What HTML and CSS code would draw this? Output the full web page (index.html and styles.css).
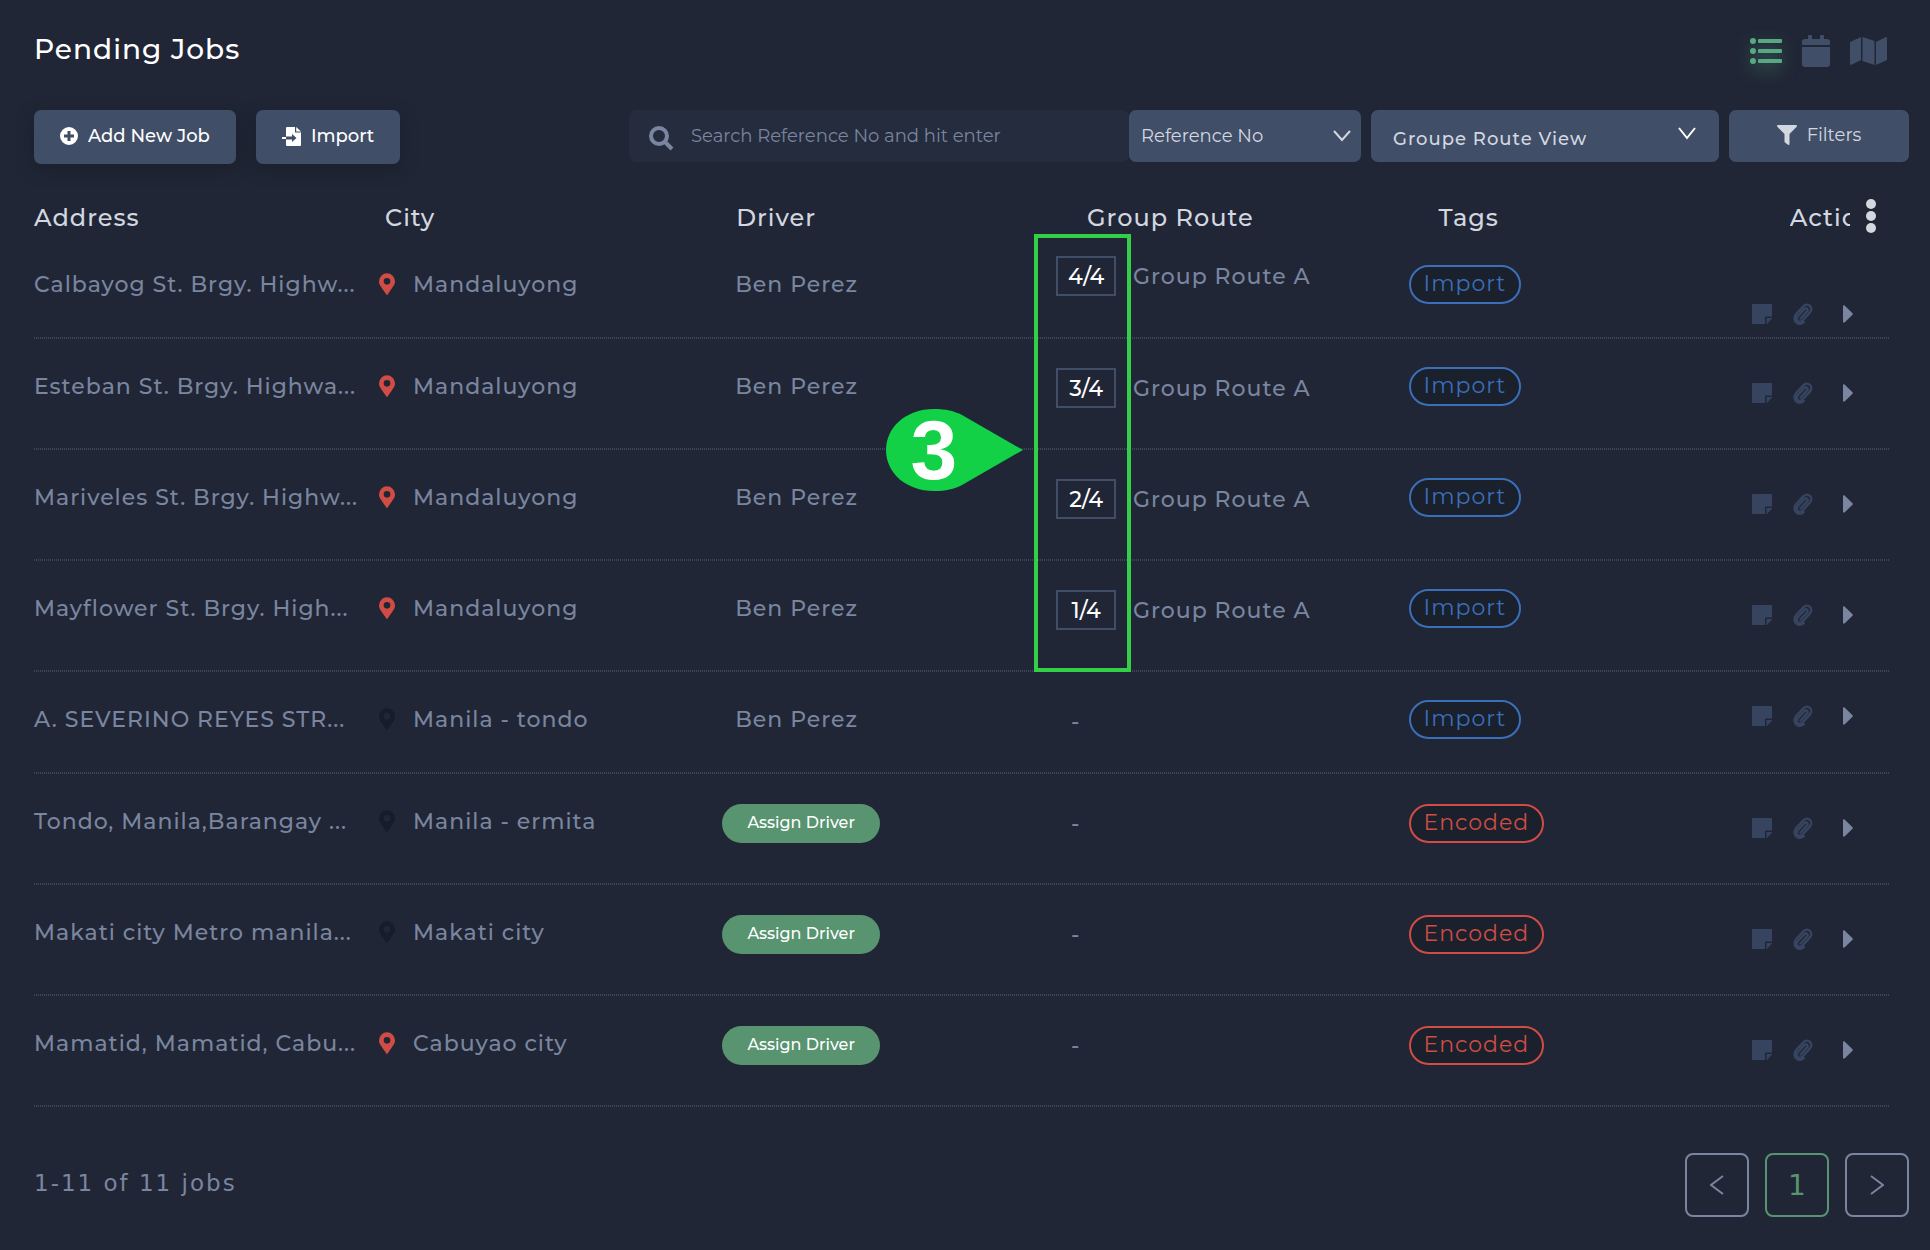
FILE: index.html
```html
<!DOCTYPE html>
<html lang="en">
<head>
<meta charset="utf-8">
<meta name="viewport" content="width=device-width, initial-scale=1">
<title>Pending Jobs</title>
<link rel="stylesheet" href="styles.css">
</head>
<body>
<svg class="sprite" aria-hidden="true">
  <symbol id="pin" viewBox="0 0 384 512"><path d="M172 502C27 291 0 270 0 192a192 192 0 0 1 384 0c0 78-27 99-172 310a24 24 0 0 1-40 0zM192 272a80 80 0 1 0 0-160 80 80 0 0 0 0 160z"/></symbol>
  <symbol id="note" viewBox="0 0 20 20"><path d="M1 0h18a1 1 0 0 1 1 1v11.500h-6a1 1 0 0 0-1 1V20H1a1 1 0 0 1-1-1V1a1 1 0 0 1 1-1z"/><path d="M14.500 14H20v.5L15 20h-.5z"/></symbol>
  <symbol id="clip" viewBox="0 0 20 22"><path d="M7.500 15.500 14 8.500c1.800-2-.8-4.300-2.600-2.400L4.800 13c-3.200 3.600 1 8 4.600 4.600l7.400-8c4.300-4.800-1.800-10.800-6.500-6.200L3.400 10.800C-1.800 17 5 24 10.800 19" fill="none" stroke="currentColor" stroke-width="2.400" stroke-linecap="round"/></symbol>
  <symbol id="caret" viewBox="0 0 10 18"><path d="M0 1.500C0 .2 1 0 1.800.8L9.500 8.200a1.200 1.200 0 0 1 0 1.600l-7.700 7.400C1 18 0 17.800 0 16.500z"/></symbol>
</svg>

<main class="page">
  <header class="top">
    <h1 class="title">Pending Jobs</h1>
    <nav class="views" aria-label="View">
      <button class="view view-active" aria-label="List view"><svg width="32" height="28" viewBox="0 0 32 28"><circle cx="3" cy="4" r="3"/><circle cx="3" cy="14" r="3"/><circle cx="3" cy="24" r="3"/><rect x="8" y="2" width="24" height="4" rx="1"/><rect x="8" y="12" width="24" height="4" rx="1"/><rect x="8" y="22" width="24" height="4" rx="1"/></svg></button>
      <button class="view" aria-label="Calendar view"><svg width="28" height="32" viewBox="0 0 28 32"><path d="M6 4V1a1 1 0 0 1 1-1h2a1 1 0 0 1 1 1v3h8V1a1 1 0 0 1 1-1h2a1 1 0 0 1 1 1v3h3a3 3 0 0 1 3 3v3H0V7a3 3 0 0 1 3-3zM0 12h28v17a3 3 0 0 1-3 3H3a3 3 0 0 1-3-3z"/></svg></button>
      <button class="view" aria-label="Map view"><svg width="37" height="28" viewBox="0 0 37 28"><path d="M0 5 11 0v23L1 28l-1-1zM12.500 0 24.500 4v24l-12-4zM26 5l10-5 1 1v22l-11 5z"/></svg></button>
    </nav>
  </header>

  <div class="toolbar">
    <button class="btn btn-raised"><svg width="18" height="18" viewBox="0 0 18 18"><path fill-rule="evenodd" d="M9 0a9 9 0 1 1 0 18A9 9 0 0 1 9 0zM7.500 4v3.500H4v3h3.500V14h3v-3.500H14v-3h-3.500V4z"/></svg>Add New Job</button>
    <button class="btn btn-raised"><svg width="19" height="19" viewBox="0 0 19 19"><path fill-rule="evenodd" d="M5 0h8v5.500h6V18a1 1 0 0 1-1 1H5a1 1 0 0 1-1-1v-5.500h6V15l4.500-4L10 7v2.500H4V1a1 1 0 0 1 1-1zM14.200 0 19 4.500h-4.800zM0 10h4v2H0z"/></svg>Import</button>
    <div class="search">
      <label class="search-box">
        <svg class="search-icon" width="25" height="25" viewBox="0 0 25 25"><circle cx="10" cy="10" r="8"/><path d="m16 16 7 7"/></svg>
        <input class="search-input" type="text" placeholder="Search Reference No and hit enter" aria-label="Search Reference No">
      </label>
      <div class="select select-field">
        <select aria-label="Search field"><option>Reference No</option></select>
        <svg class="chevron" width="18" height="12" viewBox="0 0 18 12"><path d="m1 1 8 9 8-9"/></svg>
      </div>
    </div>
    <div class="select select-view">
      <select aria-label="Route view"><option>Groupe Route View</option></select>
      <svg class="chevron chevron-bright" width="18" height="13" viewBox="0 0 18 13"><path d="m1 1 8 10 8-10"/></svg>
    </div>
    <button class="btn btn-filter"><svg width="20" height="20" viewBox="0 0 20 20"><path d="M1 0h18c1 0 1.300 1 .7 1.700L12.500 9v10c0 .8-.8 1.200-1.500.8L8 17.600c-.4-.3-.5-.6-.5-1V9L.3 1.700C-.3 1 0 0 1 0z"/></svg>Filters</button>
  </div>

  <div class="table-wrap">
    <table class="jobs">
      <colgroup><col class="c-address"><col class="c-city"><col class="c-driver"><col class="c-group"><col class="c-tags"><col class="c-actions"></colgroup>
      <thead>
        <tr>
          <th>Address</th><th class="h-city">City</th><th class="h-driver">Driver</th><th class="h-group">Group Route</th><th class="h-tags">Tags</th>
          <th class="h-actions"><div class="head-actions"><span class="head-clip">Actions</span><button class="kebab" aria-label="Columns"><svg width="10" height="34" viewBox="0 0 10 34"><circle cx="5" cy="5" r="5"/><circle cx="5" cy="17" r="5"/><circle cx="5" cy="29" r="5"/></svg></button></div></th>
        </tr>
      </thead>
      <tbody>
        <tr class="row-first">
          <td><div class="cell">Calbayog St. Brgy. Highw...</div></td>
          <td><div class="cell"><svg class="pin"><use href="#pin"/></svg>Mandaluyong</div></td>
          <td><div class="cell driver">Ben Perez</div></td>
          <td class="group"><div class="cell"><span class="count">4/4</span>Group Route A</div></td>
          <td><div class="cell"><span class="tag tag-import">Import</span></div></td>
          <td class="actions"><div class="cell tools"><button class="tool" aria-label="Notes"><svg width="20" height="20"><use href="#note"/></svg></button><button class="tool" aria-label="Attachments"><svg width="20" height="22"><use href="#clip"/></svg></button><button class="tool tool-open" aria-label="Open"><svg width="10" height="18"><use href="#caret"/></svg></button></div></td>
        </tr>
        <tr>
          <td><div class="cell">Esteban St. Brgy. Highwa...</div></td>
          <td><div class="cell"><svg class="pin"><use href="#pin"/></svg>Mandaluyong</div></td>
          <td><div class="cell driver">Ben Perez</div></td>
          <td class="group"><div class="cell"><span class="count">3/4</span>Group Route A</div></td>
          <td><div class="cell"><span class="tag tag-import">Import</span></div></td>
          <td class="actions"><div class="cell tools"><button class="tool" aria-label="Notes"><svg width="20" height="20"><use href="#note"/></svg></button><button class="tool" aria-label="Attachments"><svg width="20" height="22"><use href="#clip"/></svg></button><button class="tool tool-open" aria-label="Open"><svg width="10" height="18"><use href="#caret"/></svg></button></div></td>
        </tr>
        <tr>
          <td><div class="cell">Mariveles St. Brgy. Highw...</div></td>
          <td><div class="cell"><svg class="pin"><use href="#pin"/></svg>Mandaluyong</div></td>
          <td><div class="cell driver">Ben Perez</div></td>
          <td class="group"><div class="cell"><span class="count">2/4</span>Group Route A</div></td>
          <td><div class="cell"><span class="tag tag-import">Import</span></div></td>
          <td class="actions"><div class="cell tools"><button class="tool" aria-label="Notes"><svg width="20" height="20"><use href="#note"/></svg></button><button class="tool" aria-label="Attachments"><svg width="20" height="22"><use href="#clip"/></svg></button><button class="tool tool-open" aria-label="Open"><svg width="10" height="18"><use href="#caret"/></svg></button></div></td>
        </tr>
        <tr>
          <td><div class="cell">Mayflower St. Brgy. High...</div></td>
          <td><div class="cell"><svg class="pin"><use href="#pin"/></svg>Mandaluyong</div></td>
          <td><div class="cell driver">Ben Perez</div></td>
          <td class="group"><div class="cell"><span class="count">1/4</span>Group Route A</div></td>
          <td><div class="cell"><span class="tag tag-import">Import</span></div></td>
          <td class="actions"><div class="cell tools"><button class="tool" aria-label="Notes"><svg width="20" height="20"><use href="#note"/></svg></button><button class="tool" aria-label="Attachments"><svg width="20" height="22"><use href="#clip"/></svg></button><button class="tool tool-open" aria-label="Open"><svg width="10" height="18"><use href="#caret"/></svg></button></div></td>
        </tr>
        <tr class="row-short">
          <td><div class="cell">A. SEVERINO REYES STR...</div></td>
          <td><div class="cell"><svg class="pin pin-off"><use href="#pin"/></svg>Manila - tondo</div></td>
          <td><div class="cell driver">Ben Perez</div></td>
          <td class="group"><div class="cell none">-</div></td>
          <td><div class="cell"><span class="tag tag-import">Import</span></div></td>
          <td class="actions"><div class="cell tools"><button class="tool" aria-label="Notes"><svg width="20" height="20"><use href="#note"/></svg></button><button class="tool" aria-label="Attachments"><svg width="20" height="22"><use href="#clip"/></svg></button><button class="tool tool-open" aria-label="Open"><svg width="10" height="18"><use href="#caret"/></svg></button></div></td>
        </tr>
        <tr>
          <td><div class="cell">Tondo, Manila,Barangay ...</div></td>
          <td><div class="cell"><svg class="pin pin-off"><use href="#pin"/></svg>Manila - ermita</div></td>
          <td class="open"><div class="cell"><button class="assign">Assign Driver</button></div></td>
          <td class="group"><div class="cell none">-</div></td>
          <td class="open"><div class="cell"><span class="tag tag-encoded">Encoded</span></div></td>
          <td class="actions"><div class="cell tools"><button class="tool" aria-label="Notes"><svg width="20" height="20"><use href="#note"/></svg></button><button class="tool" aria-label="Attachments"><svg width="20" height="22"><use href="#clip"/></svg></button><button class="tool tool-open" aria-label="Open"><svg width="10" height="18"><use href="#caret"/></svg></button></div></td>
        </tr>
        <tr>
          <td><div class="cell">Makati city Metro manila...</div></td>
          <td><div class="cell"><svg class="pin pin-off"><use href="#pin"/></svg>Makati city</div></td>
          <td class="open"><div class="cell"><button class="assign">Assign Driver</button></div></td>
          <td class="group"><div class="cell none">-</div></td>
          <td class="open"><div class="cell"><span class="tag tag-encoded">Encoded</span></div></td>
          <td class="actions"><div class="cell tools"><button class="tool" aria-label="Notes"><svg width="20" height="20"><use href="#note"/></svg></button><button class="tool" aria-label="Attachments"><svg width="20" height="22"><use href="#clip"/></svg></button><button class="tool tool-open" aria-label="Open"><svg width="10" height="18"><use href="#caret"/></svg></button></div></td>
        </tr>
        <tr>
          <td><div class="cell">Mamatid, Mamatid, Cabu...</div></td>
          <td><div class="cell"><svg class="pin"><use href="#pin"/></svg>Cabuyao city</div></td>
          <td class="open"><div class="cell"><button class="assign">Assign Driver</button></div></td>
          <td class="group"><div class="cell none">-</div></td>
          <td class="open"><div class="cell"><span class="tag tag-encoded">Encoded</span></div></td>
          <td class="actions"><div class="cell tools"><button class="tool" aria-label="Notes"><svg width="20" height="20"><use href="#note"/></svg></button><button class="tool" aria-label="Attachments"><svg width="20" height="22"><use href="#clip"/></svg></button><button class="tool tool-open" aria-label="Open"><svg width="10" height="18"><use href="#caret"/></svg></button></div></td>
        </tr>
      </tbody>
    </table>
    <div class="highlight">
      <div class="callout"><svg width="138" height="82" viewBox="0 0 138 82"><path d="M137 41 76 6C68 2 60 0 48 0 20 0 0 18 0 41s20 41 48 41c12 0 20-2 28-6z"/></svg><span class="callout-number">3</span></div>
    </div>
  </div>

  <footer class="foot">
    <p class="summary">1-11 of 11 jobs</p>
    <nav class="pager" aria-label="Pages">
      <button class="page-btn" aria-label="Previous page"><svg width="14" height="20" viewBox="0 0 14 20"><path d="M13 1 1 10l12 9"/></svg></button>
      <button class="page-btn page-current">1</button>
      <button class="page-btn" aria-label="Next page"><svg width="14" height="20" viewBox="0 0 14 20"><path d="m1 1 12 9-12 9"/></svg></button>
    </nav>
  </footer>
</main>
</body>
</html>
```
FILE: styles.css
```css
* { box-sizing: border-box; }

body {
  margin: 0;
  min-height: 100vh;
  background: #202635;
  color: #7a859f;
  font-family: Montserrat, Inter, "Liberation Sans", sans-serif;
  font-size: 22px;
}

button, input, select { font: inherit; color: inherit; border: 0; margin: 0; }
button { padding: 0; background: none; cursor: pointer; }
svg { display: block; flex: none; fill: currentColor; }
.sprite { position: absolute; width: 0; height: 0; }

.page { padding: 29px 21px 33px 34px; }

.top { display: flex; justify-content: space-between; align-items: center; height: 40px; padding-right: 22px; }
.title { margin: 0; font-size: 28px; font-weight: 500; letter-spacing: 1px; color: #fff; }
.views { display: flex; align-items: center; gap: 20px; padding-top: 4px; color: #414e67; }
.view-active { color: #58a883; filter: drop-shadow(0 6px 8px rgba(88, 168, 131, .5)); }

.toolbar { display: flex; align-items: flex-start; margin-top: 41px; height: 54px; font-size: 18px; color: #d3d7e0; }
.btn { display: flex; align-items: center; justify-content: center; gap: 10px; height: 52px; padding: 0 26px 2px; border-radius: 7px; background: #414e67; white-space: nowrap; }
.btn-raised { height: 54px; margin-right: 20px; color: #fff; font-weight: 500; box-shadow: 0 5px 16px rgba(20, 25, 35, .5); }
.btn-filter { width: 180px; }
.search { display: flex; width: 732px; margin-left: auto; }
.search-box { display: flex; flex: 1; align-items: center; gap: 17px; height: 52px; padding-left: 20px; border-radius: 7px; background: #242c3e; color: #7a859f; }
.search-icon { margin-top: 4px; fill: none; stroke: currentColor; stroke-width: 4; }
.search-input { flex: 1; min-width: 0; height: 100%; padding: 0; background: none; outline: 0; }
.search-input::placeholder { color: #7a859f; opacity: 1; }
.select { position: relative; height: 52px; border-radius: 7px; background: #414e67; }
.select select { width: 100%; height: 100%; padding: 0 12px; appearance: none; background: none; }
.select-field { width: 232px; }
.select-view { width: 348px; margin: 0 10px; }
.select-view select { padding: 6px 22px 0; font-weight: 500; letter-spacing: 1px; }
.chevron { position: absolute; right: 10px; top: 20px; fill: none; stroke: currentColor; stroke-width: 2; pointer-events: none; }
.chevron-bright { right: 23px; top: 17px; color: #fff; }

.table-wrap { position: relative; margin: 35px 20px 0 0; }
.jobs { width: 100%; table-layout: fixed; border-collapse: collapse; letter-spacing: 1px; font-weight: 500; }
.c-address { width: 18.6%; }
.c-city, .c-tags { width: 18.5%; }
.c-driver { width: 18%; }
.c-group { width: 19%; }

.jobs th { height: 38px; padding: 0; vertical-align: middle; text-align: left; font-size: 24px; font-weight: 500; line-height: 30px; color: #d3d7e0; }
.jobs .h-city { padding-left: 6px; }
.jobs .h-driver { padding-left: 14px; }
.jobs .h-group { padding-left: 31px; }
.jobs .h-tags { padding-left: 30px; }
.jobs .h-actions { padding-left: 38px; }
.head-actions { display: flex; align-items: center; gap: 16px; }
.head-clip { width: 60px; overflow: hidden; }
.kebab { padding-bottom: 4px; color: #d3d7e0; }

.jobs tbody tr { height: 111px; background: repeating-linear-gradient(90deg, #3d4558 0 1px, transparent 1px 2px) bottom / 100% 2px no-repeat; }
.jobs tbody .row-first, .jobs tbody .row-short { height: 102px; }
.jobs td { padding: 27px 0 0; vertical-align: top; }
.cell { display: flex; align-items: center; height: 40px; white-space: nowrap; }
.pin { width: 16px; height: 22px; margin-right: 18px; color: #d04c44; }
.pin-off { color: #161c29; }
.driver { padding-left: 13px; }
.none { padding-left: 15px; }
.count { display: flex; align-items: center; justify-content: center; width: 60px; height: 40px; margin-right: 17px; border: 2px solid #414e67; letter-spacing: 0; color: #fff; }
.tag { height: 39px; padding: 0 13px; border: 2px solid; border-radius: 20px; background: #1a202c; font-weight: 400; line-height: 34px; }
.tag-import { color: #3b6fba; }
.tag-encoded { color: #d04c44; }
.assign { height: 39px; width: 158px; padding-bottom: 2px; border-radius: 20px; background: #57946f; color: #fff; font-size: 16px; font-weight: 500; }
.jobs .open { padding-top: 29px; }
.jobs .group { padding-top: 29px; }
.jobs .actions { padding-top: 34px; }
.tools { gap: 21px; color: #37445f; }
.tool-open { margin-left: 9px; color: #7a859f; }
.jobs .row-first .group { padding-top: 19px; }
.jobs .row-first .actions { padding-top: 57px; }
.jobs .row-short .actions { padding-top: 24px; }

/* Walkthrough marker laid over the route order column */
.highlight { position: absolute; top: 35px; left: 53.9%; width: 97px; height: 438px; border: 4px solid #33cf47; }
.callout { position: absolute; right: 103px; top: 171px; }
.callout svg { color: #12d147; }
.callout-number { position: absolute; top: 0; left: 0; width: 96px; text-align: center; line-height: 82px; font-family: "Liberation Sans", sans-serif; font-size: 84px; font-weight: 700; color: #fff; }

.foot { display: flex; justify-content: space-between; align-items: center; margin-top: 46px; }
.summary { margin: 0; padding-bottom: 4px; font-family: "DejaVu Sans", sans-serif; font-size: 23px; letter-spacing: 2px; }
.pager { display: flex; gap: 16px; }
.page-btn { display: flex; align-items: center; justify-content: center; width: 64px; height: 64px; border: 2px solid #7a859f; border-radius: 8px; font-family: "DejaVu Sans", sans-serif; font-size: 28px; }
.page-btn svg { fill: none; stroke: currentColor; stroke-width: 2; }
.page-current { border-color: #57946f; color: #57946f; }
```
